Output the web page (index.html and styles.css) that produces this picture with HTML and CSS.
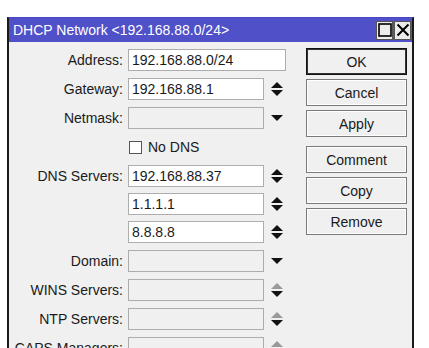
FILE: index.html
```html
<!DOCTYPE html>
<html>
<head>
<meta charset="utf-8">
<link rel="stylesheet" href="styles.css">
</head>
<body>
<div class="window">
  <div class="titlebar">
    <span class="title">DHCP Network &lt;192.168.88.0/24&gt;</span>
    <div class="tbtns">
      <span class="tbtn"><svg width="14" height="14" viewBox="0 0 14 14"><rect x="1" y="1" width="12" height="12" fill="none" stroke="#000" stroke-width="1.6"/></svg></span>
      <span class="tbtn"><svg width="14" height="14" viewBox="0 0 14 14"><path d="M1.5 1.5 L12.5 12.5 M12.5 1.5 L1.5 12.5" stroke="#000" stroke-width="2"/></svg></span>
    </div>
  </div>
  <div class="content">
    <div class="form">
      <div class="row"><label class="lbl">Address:</label><div class="field wide">192.168.88.0/24</div></div>
      <div class="row"><label class="lbl">Gateway:</label><div class="field">192.168.88.1</div><span class="arr"><svg width="14" height="16" viewBox="0 0 14 16"><path d="M1 7 L7 1 L13 7 Z" fill="#111"/><path d="M1 9 L7 15 L13 9 Z" fill="#111"/></svg></span></div>
      <div class="row"><label class="lbl">Netmask:</label><div class="field empty"></div><span class="arr"><svg width="14" height="16" viewBox="0 0 14 16"><path d="M1 5 L7 11 L13 5 Z" fill="#111"/></svg></span></div>
      <div class="row"><span class="lbl"></span><span class="check"></span><span class="cbtext">No DNS</span></div>
      <div class="row"><label class="lbl">DNS Servers:</label><div class="field">192.168.88.37</div><span class="arr"><svg width="14" height="16" viewBox="0 0 14 16"><path d="M1 7 L7 1 L13 7 Z" fill="#111"/><path d="M1 9 L7 15 L13 9 Z" fill="#111"/></svg></span></div>
      <div class="row sub"><span class="lbl"></span><div class="field">1.1.1.1</div><span class="arr"><svg width="14" height="16" viewBox="0 0 14 16"><path d="M1 7 L7 1 L13 7 Z" fill="#111"/><path d="M1 9 L7 15 L13 9 Z" fill="#111"/></svg></span></div>
      <div class="row sub"><span class="lbl"></span><div class="field">8.8.8.8</div><span class="arr"><svg width="14" height="16" viewBox="0 0 14 16"><path d="M1 7 L7 1 L13 7 Z" fill="#111"/><path d="M1 9 L7 15 L13 9 Z" fill="#111"/></svg></span></div>
      <div class="row"><label class="lbl">Domain:</label><div class="field empty"></div><span class="arr"><svg width="14" height="16" viewBox="0 0 14 16"><path d="M1 5 L7 11 L13 5 Z" fill="#111"/></svg></span></div>
      <div class="row"><label class="lbl">WINS Servers:</label><div class="field empty"></div><span class="arr"><svg width="14" height="16" viewBox="0 0 14 16"><path d="M1 7 L7 1 L13 7 Z" fill="#9a9a9a"/><path d="M1 9 L7 15 L13 9 Z" fill="#111"/></svg></span></div>
      <div class="row"><label class="lbl">NTP Servers:</label><div class="field empty"></div><span class="arr"><svg width="14" height="16" viewBox="0 0 14 16"><path d="M1 7 L7 1 L13 7 Z" fill="#9a9a9a"/><path d="M1 9 L7 15 L13 9 Z" fill="#111"/></svg></span></div>
      <div class="row"><label class="lbl">CAPS Managers:</label><div class="field empty"></div><span class="arr"><svg width="14" height="16" viewBox="0 0 14 16"><path d="M1 7 L7 1 L13 7 Z" fill="#9a9a9a"/><path d="M1 9 L7 15 L13 9 Z" fill="#111"/></svg></span></div>
    </div>
    <div class="buttons">
      <button class="btn default">OK</button>
      <button class="btn">Cancel</button>
      <button class="btn">Apply</button>
      <button class="btn sep">Comment</button>
      <button class="btn">Copy</button>
      <button class="btn">Remove</button>
    </div>
  </div>
</div>
</body>
</html>
```
FILE: styles.css
```css
html, body {
  margin: 0;
  padding: 0;
  background: #ffffff;
  overflow: hidden;
}
body {
  width: 429px;
  height: 348px;
  font-family: "Liberation Sans", Arial, sans-serif;
  font-size: 14px;
  color: #1a1a1a;
}
.window {
  margin: 17px 0 0 7px;
  width: 407px;
  height: 345px;
  box-sizing: border-box;
  border-left: 2px solid #1a1a1a;
  border-right: 2px solid #1a1a1a;
  border-top: 1px solid #4848c0;
  background: #f0f0f0;
  display: flex;
  flex-direction: column;
}
.titlebar {
  height: 24px;
  flex: none;
  background: #5050c8;
  display: flex;
  align-items: center;
  justify-content: space-between;
  padding-left: 4px;
}
.title {
  color: #ffffff;
  font-size: 14px;
}
.tbtns {
  display: flex;
  gap: 1px;
  margin-right: 1px;
}
.tbtn {
  width: 17px;
  height: 19px;
  box-sizing: border-box;
  background: #ececec;
  border: 1px solid #555;
  display: flex;
  align-items: center;
  justify-content: center;
}
.content {
  display: flex;
  padding-top: 7px;
}
.form {
  display: flex;
  flex-direction: column;
  gap: 7px;
}
.row {
  display: flex;
  align-items: center;
  height: 22px;
  flex: none;
}
.row.sub {
  margin-top: -1px;
}
.lbl {
  width: 114px;
  text-align: right;
  margin-right: 5px;
  white-space: nowrap;
}
.field {
  width: 136px;
  height: 22px;
  box-sizing: border-box;
  border: 1px solid #adadad;
  background: #ffffff;
  padding: 0 3px;
  line-height: 20px;
}
.field.wide {
  width: 158px;
}
.field.empty {
  background: #f0f0f0;
}
.arr {
  margin-left: 6px;
  width: 14px;
  height: 16px;
  display: flex;
}
.check {
  width: 13px;
  height: 13px;
  box-sizing: border-box;
  border: 1px solid #555;
  background: #ffffff;
  margin-left: 1px;
}
.cbtext {
  margin-left: 6px;
}
.buttons {
  display: flex;
  flex-direction: column;
  gap: 4px;
  margin-left: 20px;
  margin-top: -1px;
}
.btn {
  width: 101px;
  height: 27px;
  flex: none;
  box-sizing: border-box;
  font-family: "Liberation Sans", Arial, sans-serif;
  font-size: 14px;
  color: #1a1a1a;
  background: #f0f0f0;
  border: 1px solid #7a7a7a;
  box-shadow: inset 0 0 0 1px #ffffff;
  padding: 0;
}
.btn.default {
  border: 1px solid #111;
  box-shadow: inset 0 0 0 1px #333;
}
.btn.sep {
  margin-top: 5px;
}
```
